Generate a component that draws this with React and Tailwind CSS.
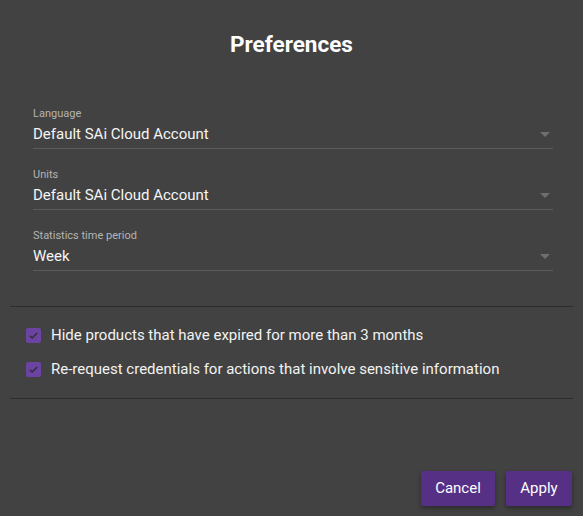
import React, { useState } from 'react';

const fields = [
  { label: 'Language', value: 'Default SAi Cloud Account' },
  { label: 'Units', value: 'Default SAi Cloud Account' },
  { label: 'Statistics time period', value: 'Week' },
];

const options = [
  'Hide products that have expired for more than 3 months',
  'Re-request credentials for actions that involve sensitive information',
];

const SelectField = ({ label, value }) => (
  <div className="pt-[19px]">
    <div className="text-[11px] leading-[14px] text-[#b4b4b4]">{label}</div>
    <div className="flex items-center justify-between h-[28px] border-b border-[#5c5c5c]">
      <span className="text-[15px] text-[#f5f5f5]">{value}</span>
      <span className="mr-[3px] w-0 h-0 border-l-[5px] border-r-[5px] border-t-[5px] border-l-transparent border-r-transparent border-t-[#6e6e6e]" />
    </div>
  </div>
);

const Check = ({ label, checked, onChange }) => (
  <label className="flex items-center gap-[10px] h-[34px] cursor-pointer">
    <span
      onClick={onChange}
      className="w-[15px] h-[15px] rounded-[2px] bg-[#6b44a3] flex items-center justify-center"
    >
      {checked && (
        <svg width="11" height="11" viewBox="0 0 24 24" fill="none" stroke="#2f2f2f" strokeWidth="3">
          <path d="M4 12.5l5 5L20 6.5" />
        </svg>
      )}
    </span>
    <span className="text-[15px] text-[#f2f2f2]">{label}</span>
  </label>
);

const App = () => {
  const [checks, setChecks] = useState([true, true]);

  const toggle = (i) => setChecks((c) => c.map((v, j) => (j === i ? !v : v)));

  return (
    <div
      className="w-[583px] h-[516px] bg-[#424242] flex flex-col"
      style={{ fontFamily: 'Roboto, "Liberation Sans", sans-serif' }}
    >
      <h1 className="text-center text-[22.5px] font-bold text-white pt-[30px] leading-[28px]">
        Preferences
      </h1>

      <div className="pl-[33px] pr-[30px] pt-[30px] pb-[35px]">
        {fields.map((f) => (
          <SelectField key={f.label} label={f.label} value={f.value} />
        ))}
      </div>

      <div className="mx-[10px] border-t border-[#2e2e2e]" />
      <div className="px-[26px] pt-[11px] pb-[12px]">
        {options.map((o, i) => (
          <Check key={o} label={o} checked={checks[i]} onChange={() => toggle(i)} />
        ))}
      </div>
      <div className="mx-[10px] border-t border-[#2e2e2e]" />

      <div className="flex-1 flex items-end justify-end gap-[11px] px-[11px] pb-[10px]">
        <button className="w-[74px] h-[35px] rounded-[2px] bg-[#553085] text-white text-[15px] shadow-[0_2px_4px_rgba(0,0,0,0.4)]">
          Cancel
        </button>
        <button className="w-[66px] h-[35px] rounded-[2px] bg-[#553085] text-white text-[15px] shadow-[0_2px_4px_rgba(0,0,0,0.4)]">
          Apply
        </button>
      </div>
    </div>
  );
};

export default App;
